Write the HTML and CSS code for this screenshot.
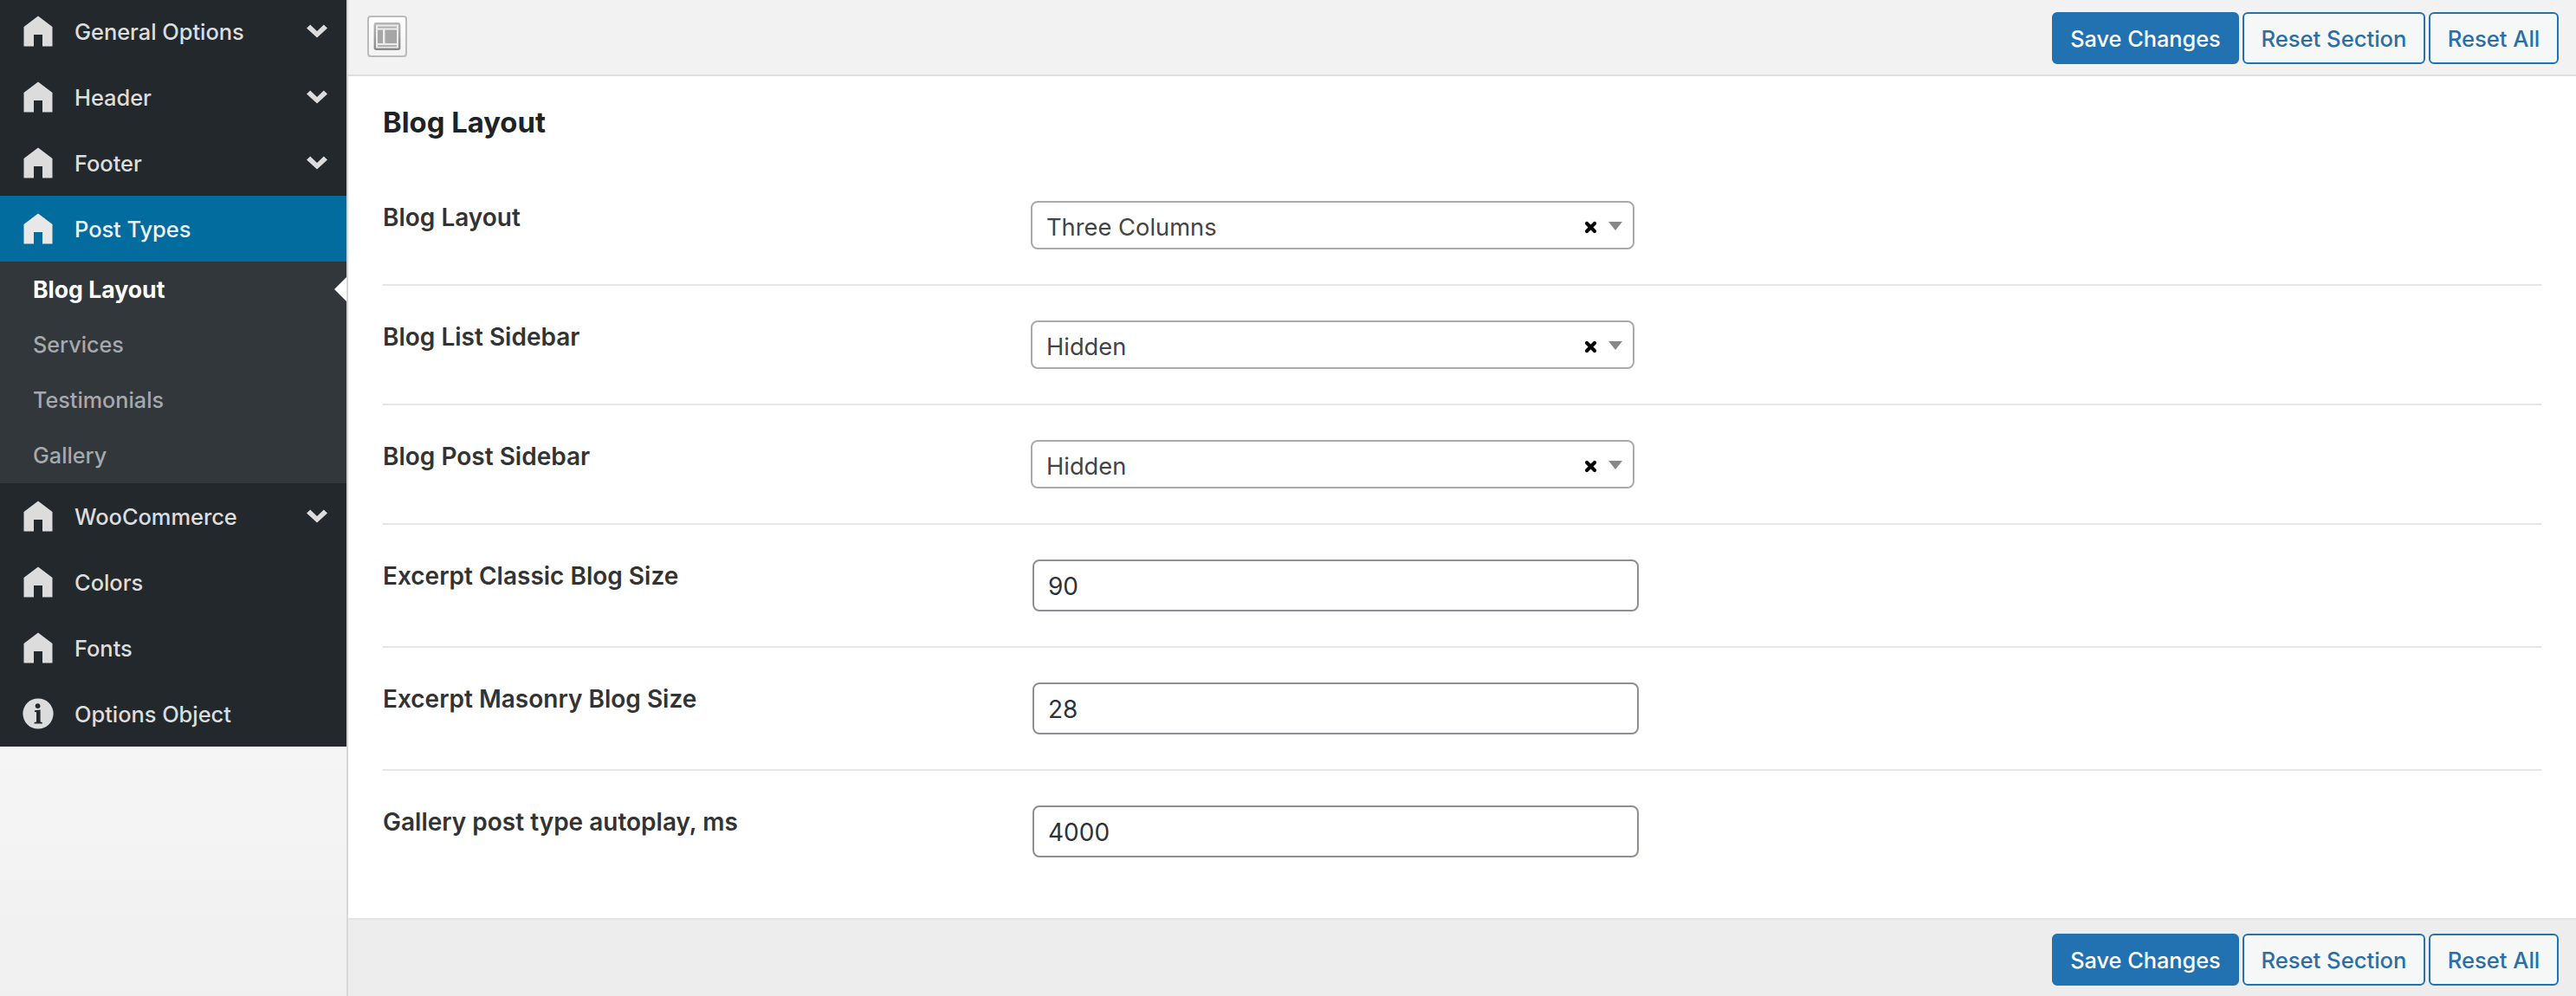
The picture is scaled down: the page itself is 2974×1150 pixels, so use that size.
FILE: index.html
```html
<!DOCTYPE html>
<html lang="en">
<head>
<meta charset="utf-8">
<title>Theme Options</title>
<link rel="stylesheet" href="styles.css">
</head>
<body>
<svg class="sprite" aria-hidden="true">
  <symbol id="home" viewBox="0 0 36 36"><path d="M18 0.5L34.5 13V35.5H23V22H13V35.5H1.5V13Z"/></symbol>
  <symbol id="info" viewBox="0 0 36 36"><path fill-rule="evenodd" d="M18 0.4a17.6 17.6 0 1 0 0 35.2a17.6 17.6 0 1 0 0-35.2ZM17.6 6.2a2.9 2.9 0 1 1 0 5.8a2.9 2.9 0 1 1 0-5.8ZM14 14.2L20.6 13.6V27.4L22.8 28V29.6H13.6V28L16 27.4V16.3L14 15.9Z"/></symbol>
  <symbol id="chevron" viewBox="0 0 24 16"><path d="M0 4.4L4.2 0.4L12 8L19.8 0.4L24 4.4L12 15.6Z"/></symbol>
  <symbol id="clear" viewBox="0 0 15 15"><path d="M3 3L12 12M12 3L3 12" stroke="#000" stroke-width="4.2" stroke-linecap="round"/></symbol>
  <symbol id="caret" viewBox="0 0 16 10"><path d="M0 0H16L8 10Z"/></symbol>
</svg>
<div class="panel">
  <aside class="sidebar">
    <ul class="menu">
      <li class="item"><svg class="icon"><use href="#home"/></svg><span class="text">General Options</span><svg class="arrow"><use href="#chevron"/></svg></li>
      <li class="item"><svg class="icon"><use href="#home"/></svg><span class="text">Header</span><svg class="arrow"><use href="#chevron"/></svg></li>
      <li class="item"><svg class="icon"><use href="#home"/></svg><span class="text">Footer</span><svg class="arrow"><use href="#chevron"/></svg></li>
      <li class="item active"><svg class="icon"><use href="#home"/></svg><span class="text">Post Types</span></li>
      <li>
        <ul class="submenu">
          <li class="subitem current">Blog Layout</li>
          <li class="subitem">Services</li>
          <li class="subitem">Testimonials</li>
          <li class="subitem">Gallery</li>
        </ul>
      </li>
      <li class="item"><svg class="icon"><use href="#home"/></svg><span class="text">WooCommerce</span><svg class="arrow"><use href="#chevron"/></svg></li>
      <li class="item"><svg class="icon"><use href="#home"/></svg><span class="text">Colors</span></li>
      <li class="item"><svg class="icon"><use href="#home"/></svg><span class="text">Fonts</span></li>
      <li class="item"><svg class="icon"><use href="#info"/></svg><span class="text">Options Object</span></li>
    </ul>
  </aside>
  <main class="main">
    <header class="bar">
      <button class="expand" aria-label="Expand options">
        <svg width="32" height="34" viewBox="0 0 32 34">
          <defs><linearGradient id="frame" x2="0" y2="1"><stop stop-color="#b4b4b4"/><stop offset="1" stop-color="#8a8a8a"/></linearGradient></defs>
          <rect x="1.8" y="2.2" width="28.4" height="29.6" rx="1.5" fill="#ececec" stroke="url(#frame)" stroke-width="2.4"/>
          <path fill="#b0b0b0" d="M5 5.5H27V7.5H5ZM5 27H27V29H5Z"/>
          <path fill="#a6a6a6" d="M5 9.5H11V25H5ZM13.5 9.5H27V25H13.5Z"/>
        </svg>
      </button>
      <div class="actions">
        <button class="btn save">Save Changes</button>
        <button class="btn section">Reset Section</button>
        <button class="btn all">Reset All</button>
      </div>
    </header>
    <section class="content">
      <h2 class="title">Blog Layout</h2>
      <div class="row"><div class="label">Blog Layout</div><div class="select"><span class="value">Three Columns</span><svg class="clear"><use href="#clear"/></svg><svg class="caret"><use href="#caret"/></svg></div></div>
      <div class="row"><div class="label">Blog List Sidebar</div><div class="select"><span class="value">Hidden</span><svg class="clear"><use href="#clear"/></svg><svg class="caret"><use href="#caret"/></svg></div></div>
      <div class="row"><div class="label">Blog Post Sidebar</div><div class="select"><span class="value">Hidden</span><svg class="clear"><use href="#clear"/></svg><svg class="caret"><use href="#caret"/></svg></div></div>
      <div class="row"><label class="label" for="classic">Excerpt Classic Blog Size</label><input class="input" id="classic" type="text" value="90"></div>
      <div class="row"><label class="label" for="masonry">Excerpt Masonry Blog Size</label><input class="input" id="masonry" type="text" value="28"></div>
      <div class="row"><label class="label" for="autoplay">Gallery post type autoplay, ms</label><input class="input" id="autoplay" type="text" value="4000"></div>
    </section>
    <footer class="bar bottom">
      <div class="actions">
        <button class="btn save">Save Changes</button>
        <button class="btn section">Reset Section</button>
        <button class="btn all">Reset All</button>
      </div>
    </footer>
  </main>
</div>
</body>
</html>
```
FILE: styles.css
```css
* { box-sizing: border-box; }

body {
  margin: 0;
  overflow: hidden;
  font-family: Inter, "Liberation Sans", sans-serif;
  background: #fff;
}

ul { margin: 0; padding: 0; list-style: none; }
button, input { font-family: inherit; margin: 0; }

.sprite { display: none; }

.panel { display: flex; height: 1150px; }

/* Sidebar */
.sidebar {
  flex: none;
  width: 402px;
  border-right: 2px solid #d8d8d8;
  background: linear-gradient(#f5f5f5 862px, #f0f0f0);
}

.menu { margin-top: -2px; background: #23282d; }

.item {
  display: flex;
  align-items: center;
  height: 76px;
  padding: 0 22px 0 25.5px;
  color: #dcdddd;
  fill: #dcdcdc;
  font-size: 25.5px;
  font-weight: 450;
}

.icon { width: 36px; height: 36px; flex: none; }
.text { flex: 1; padding-left: 24.5px; letter-spacing: -0.07px; }
.arrow { width: 24px; height: 16px; }

.item.active {
  background: #036c9f;
  color: #eaf4f9;
  fill: #e8e8e8;
  box-shadow: 2px 0 0 #bfe0f0;
}

.submenu { background: #32373c; }

.subitem {
  display: flex;
  align-items: center;
  height: 64px;
  padding-left: 38px;
  font-size: 25.2px;
  font-weight: 450;
  color: #a5a9ac;
}

.subitem.current {
  justify-content: space-between;
  color: #fff;
  font-size: 26.6px;
  font-weight: 700;
}

/* Pointer toward the open section */
.subitem.current::after {
  content: "";
  border: 14px solid transparent;
  border-left-width: 0;
  border-right-color: #fff;
}

/* Main column */
.main { flex: 1; display: flex; flex-direction: column; min-width: 0; }

.bar {
  display: flex;
  justify-content: space-between;
  height: 88px;
  padding: 14px 20px 0 22px;
  background: #f2f2f2;
  border-bottom: 2px solid #dedede;
}

.bar.bottom {
  justify-content: flex-end;
  height: 90px;
  padding-top: 16px;
  background: #ededed;
  border-top: 2px solid #e4e4e4;
  border-bottom: 0;
}

.expand {
  display: flex;
  align-items: center;
  justify-content: center;
  width: 46px;
  height: 48px;
  margin-top: 4px;
  padding: 0;
  border: 2px solid #bbb;
  border-radius: 4px;
  background: linear-gradient(#fff, #f3f3f3);
}
.expand svg { flex: none; }

.actions { display: flex; gap: 4px; }

.btn {
  height: 60px;
  padding: 1px 0 0;
  border: 2px solid #2271b1;
  border-radius: 6px;
  background: #f6f7f7;
  color: #2a6fa8;
  font-size: 25.6px;
  font-weight: 450;
  white-space: nowrap;
}
.save { width: 216px; background: #2271b1; color: #fff; font-size: 25.3px; }
.section { width: 211px; }
.all { width: 150px; }

.content { flex: 1; padding: 33px 40px 0; }

.title {
  margin: 0 0 31px;
  line-height: 40px;
  font-size: 32.8px;
  font-weight: 650;
  color: #1d2327;
}

.row {
  display: flex;
  align-items: flex-start;
  padding: 40px 0;
  border-bottom: 2px solid #e7e7e7;
}
.row:last-child { border-bottom: 0; }

.label {
  width: 748px;
  margin-top: -1px;
  line-height: 40px;
  font-size: 28px;
  font-weight: 640;
  color: #333;
}

.select {
  display: flex;
  align-items: center;
  width: 697px;
  height: 56px;
  padding: 0 12px 0 16px;
  border: 2px solid #aaa;
  border-radius: 8px;
  background: #fff;
}
.value { flex: 1; padding-top: 5px; font-size: 27.3px; font-weight: 420; color: #444; }
.clear { width: 15px; height: 15px; margin: 5px 13px 0 0; }
.caret { width: 16px; height: 10px; margin-top: 2px; fill: #888; }

.input {
  width: 700px;
  height: 60px;
  margin-left: 2px;
  padding: 2px 16px 0;
  border: 2px solid #8c8f94;
  border-radius: 8px;
  background: #fff;
  color: #2c3338;
  font-size: 28px;
  font-weight: 420;
}
```
